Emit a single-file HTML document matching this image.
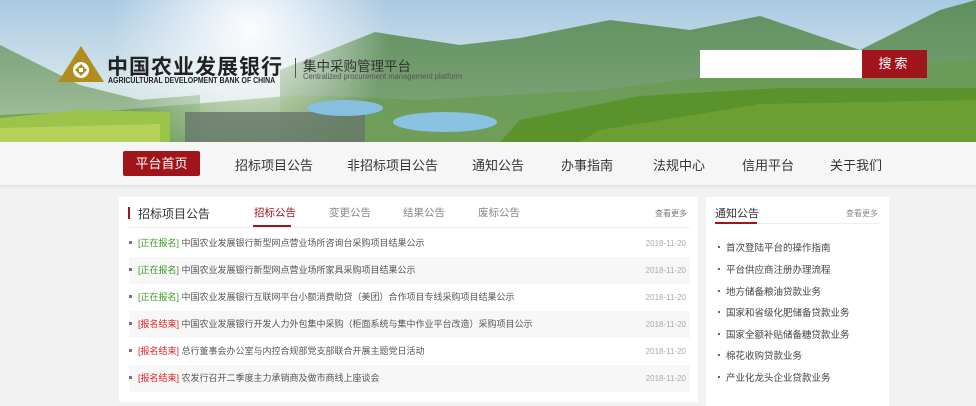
<!DOCTYPE html>
<html><head><meta charset="utf-8"><style>
*{margin:0;padding:0;box-sizing:border-box}
body{width:976px;height:406px;overflow:hidden;background:#f2f2f2;font-family:"Liberation Sans","Noto Sans CJK SC",sans-serif;position:relative}
.ban{position:absolute;left:0;top:0;width:976px;height:142px}
.abs{position:absolute}
.nav{position:absolute;left:0;top:142px;width:976px;height:43px;background:#f6f6f6;box-shadow:0 2px 3px rgba(0,0,0,.08)}
.nav span{position:absolute;top:13px;font-size:13px;color:#333;white-space:nowrap}
.home{position:absolute;left:123px;top:151px;width:77px;height:25px;background:#a0141c;border-radius:2px;color:#fff;font-size:13px;text-align:center;line-height:25px}
.card{position:absolute;background:#fff}
.row{position:absolute;left:10px;width:561px;height:27px;font-size:9px;color:#555;line-height:27px;white-space:nowrap}
.row.s{background:#f7f7f7}
.row i{display:inline-block;width:3px;height:3px;background:#777;margin:0 6px 2px 0;vertical-align:middle}
.g{color:#3a9a22}.r{color:#e02020}
.row b{font-weight:normal;position:absolute;right:4px;color:#aaa;font-size:8px}
.li{position:absolute;left:12px;font-size:9.5px;color:#444;white-space:nowrap}
.li i{display:inline-block;width:2px;height:2px;background:#666;margin:0 6px 2px 0;vertical-align:middle}
</style></head><body>
<svg class="ban" viewBox="0 0 976 142" preserveAspectRatio="none">
<defs>
<linearGradient id="sky" x1="0" y1="0" x2="0" y2="1"><stop offset="0" stop-color="#a9c9e3"/><stop offset=".6" stop-color="#d7e6ea"/><stop offset="1" stop-color="#c9dccd"/></linearGradient>
<linearGradient id="m1" x1="0" y1="0" x2="0" y2="1"><stop offset="0" stop-color="#5f8f5f"/><stop offset="1" stop-color="#84a97c"/></linearGradient>
<linearGradient id="m0" x1="0" y1="0" x2="0" y2="1"><stop offset="0" stop-color="#7da57a"/><stop offset="1" stop-color="#a9c3a2"/></linearGradient>
<radialGradient id="sun" cx="250" cy="30" r="140" gradientUnits="userSpaceOnUse"><stop offset="0" stop-color="#fff" stop-opacity=".95"/><stop offset="1" stop-color="#fff" stop-opacity="0"/></radialGradient>
</defs>
<rect width="976" height="142" fill="url(#sky)"/>
<path d="M0 45 L40 65 L80 85 L140 100 L200 95 L200 142 L0 142Z" fill="url(#m0)"/>
<path d="M280 70 L375 32 L400 36 L460 45 L520 38 L610 20 L690 30 L760 16 L860 50 L940 10 L976 0 L976 142 L280 142Z" fill="url(#m1)"/>
<path d="M120 110 L300 95 L420 100 L600 90 L760 70 L976 60 L976 142 L0 142 L0 115Z" fill="#6c9b52" opacity=".8"/>
<rect width="976" height="142" fill="url(#sun)"/>
<path d="M0 118 L80 110 L170 112 L170 142 L0 142Z" fill="#9cc34a"/>
<path d="M0 128 L160 124 L160 142 L0 142Z" fill="#b6d15a"/>
<path d="M520 120 L640 96 L780 88 L976 88 L976 142 L500 142Z" fill="#5a922c"/>
<path d="M600 130 L760 104 L976 100 L976 142 L580 142Z" fill="#6fa236" opacity=".8"/>
<rect x="185" y="112" width="180" height="30" fill="#66776a" opacity=".8"/>
<ellipse cx="345" cy="108" rx="38" ry="8" fill="#86bfdf"/>
<ellipse cx="445" cy="122" rx="52" ry="10" fill="#8ac2e2"/>
</svg>
<svg class="abs" style="left:58px;top:46px" width="46" height="36" viewBox="0 0 46 36"><path d="M23 0 L46 36 L0 36Z" fill="#b08d1d"/><circle cx="23" cy="24" r="8" fill="#fff"/><path d="M23 18 L29 24 L23 30 L17 24Z" fill="#b08d1d"/><rect x="21" y="22" width="4" height="4" fill="#fff"/></svg>
<div class="abs" style="left:107px;top:51px;font-size:21px;font-weight:bold;color:#222;letter-spacing:1px;white-space:nowrap">中国农业发展银行</div>
<div class="abs" style="left:108px;top:76px;font-size:8px;font-weight:bold;color:#222;white-space:nowrap;transform:scaleX(.87);transform-origin:left">AGRICULTURAL DEVELOPMENT BANK OF CHINA</div>
<div class="abs" style="left:295px;top:58px;width:1px;height:20px;background:#555"></div>
<div class="abs" style="left:303px;top:55px;font-size:13.5px;color:#333;white-space:nowrap">集中采购管理平台</div>
<div class="abs" style="left:303px;top:72px;font-size:8px;color:#555;white-space:nowrap;transform:scaleX(.95);transform-origin:left">Centralized procurement management platform</div>
<div class="abs" style="left:700px;top:50px;width:162px;height:28px;background:#fff"></div>
<div class="abs" style="left:862px;top:50px;width:65px;height:28px;background:#a0141c;color:#fff;font-size:13px;text-align:center;line-height:28px;letter-spacing:3px">搜索</div>
<div class="nav">
<span style="left:235px">招标项目公告</span><span style="left:347px">非招标项目公告</span><span style="left:472px">通知公告</span><span style="left:561px">办事指南</span><span style="left:653px">法规中心</span><span style="left:742px">信用平台</span><span style="left:830px">关于我们</span>
</div>
<div class="home">平台首页</div>
<div class="card" style="left:119px;top:197px;width:579px;height:205px">
<div class="abs" style="left:9px;top:10px;width:2px;height:12px;background:#a0141c"></div>
<div class="abs" style="left:19px;top:8px;font-size:12px;color:#333">招标项目公告</div>
<div class="abs" style="left:135px;top:8px;font-size:10.5px;color:#a0141c">招标公告</div>
<div class="abs" style="left:134px;top:28px;width:38px;height:2px;background:#a0141c"></div>
<div class="abs" style="left:210px;top:8px;font-size:10.5px;color:#888">变更公告</div>
<div class="abs" style="left:284px;top:8px;font-size:10.5px;color:#888">结果公告</div>
<div class="abs" style="left:359px;top:8px;font-size:10.5px;color:#888">废标公告</div>
<div class="abs" style="left:536px;top:11px;font-size:8px;color:#777">查看更多</div>
<div class="abs" style="left:10px;top:30px;width:561px;height:1px;background:#eee"></div>
<div class="row" style="top:33px"><i></i><span class="g">[正在报名]</span> 中国农业发展银行新型网点营业场所咨询台采购项目结果公示<b>2018-11-20</b></div>
<div class="row s" style="top:60px"><i></i><span class="g">[正在报名]</span> 中国农业发展银行新型网点营业场所家具采购项目结果公示<b>2018-11-20</b></div>
<div class="row" style="top:87px"><i></i><span class="g">[正在报名]</span> 中国农业发展银行互联网平台小额消费助贷（美团）合作项目专线采购项目结果公示<b>2018-11-20</b></div>
<div class="row s" style="top:114px"><i></i><span class="r">[报名结束]</span> 中国农业发展银行开发人力外包集中采购（柜面系统与集中作业平台改造）采购项目公示<b>2018-11-20</b></div>
<div class="row" style="top:141px"><i></i><span class="r">[报名结束]</span> 总行董事会办公室与内控合规部党支部联合开展主题党日活动<b>2018-11-20</b></div>
<div class="row s" style="top:168px"><i></i><span class="r">[报名结束]</span> 农发行召开二季度主力承销商及做市商线上座谈会<b>2018-11-20</b></div>
</div>
<div class="card" style="left:706px;top:197px;width:183px;height:209px">
<div class="abs" style="left:9px;top:8px;font-size:11px;color:#333">通知公告</div>
<div class="abs" style="left:9px;top:25px;width:42px;height:2px;background:#a0141c"></div>
<div class="abs" style="left:51px;top:26px;width:124px;height:1px;background:#eee"></div>
<div class="abs" style="left:140px;top:11px;font-size:8px;color:#888">查看更多</div>
<div class="li" style="top:43px"><i></i>首次登陆平台的操作指南</div>
<div class="li" style="top:65px"><i></i>平台供应商注册办理流程</div>
<div class="li" style="top:87px"><i></i>地方储备粮油贷款业务</div>
<div class="li" style="top:108px"><i></i>国家和省级化肥储备贷款业务</div>
<div class="li" style="top:130px"><i></i>国家全额补贴储备糖贷款业务</div>
<div class="li" style="top:151px"><i></i>棉花收购贷款业务</div>
<div class="li" style="top:173px"><i></i>产业化龙头企业贷款业务</div>
</div>
</body></html>
